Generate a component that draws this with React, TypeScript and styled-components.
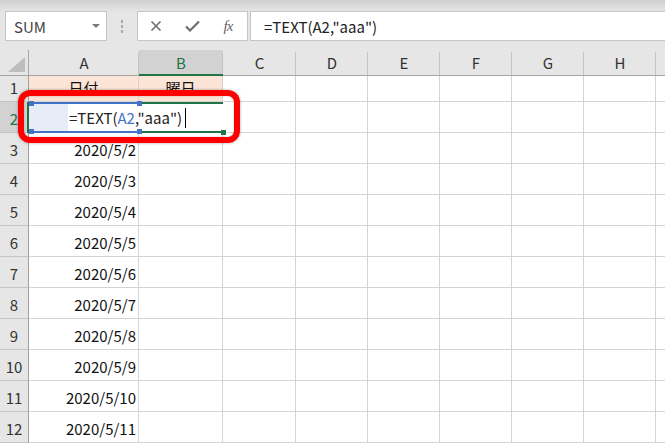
import React from 'react';
import styled, { createGlobalStyle, css } from 'styled-components';

const GlobalStyle = createGlobalStyle`
  html, body {
    margin: 0;
    padding: 0;
    background: #ffffff;
    overflow: hidden;
  }
  body {
    font-family: "Noto Sans CJK JP", "Noto Sans", sans-serif;
  }
`;

const FONT = `"Noto Sans CJK JP", "Noto Sans", sans-serif`;
const GREEN = '#217346';
const GRID = '#d4d4d4';

const Page = styled.div`
  width: 665px;
  height: 443px;
  display: flex;
  flex-direction: column;
  background: #ffffff;
  overflow: hidden;
`;

const Toolbar = styled.div`
  height: 50px;
  flex: none;
  display: flex;
  align-items: flex-start;
  padding: 11px 0 0 5px;
  box-sizing: border-box;
  background: linear-gradient(#cfcfcf 0px, #e3e3e3 10px, #e6e6e6 14px);
`;

const Box = styled.div<{ $w: number }>`
  width: ${(p) => p.$w}px;
  height: 30px;
  flex: none;
  box-sizing: border-box;
  background: #ffffff;
  border: 1px solid #c6c6c6;
  display: flex;
  align-items: center;
`;

const NameText = styled.span`
  flex: 1;
  padding-left: 8px;
  font-family: ${FONT};
  font-size: 15px;
  color: #444;
`;

const DropTri = styled.span`
  width: 0;
  height: 0;
  margin-right: 6px;
  border-left: 4px solid transparent;
  border-right: 4px solid transparent;
  border-top: 4px solid #7a7a7a;
`;

const Dots = styled.div`
  width: 30px;
  height: 30px;
  flex: none;
  display: flex;
  flex-direction: column;
  align-items: center;
  justify-content: center;
  gap: 2px;
  span {
    width: 2px;
    height: 3px;
    background: #a8a8a8;
  }
`;

const IconBtn = styled.div`
  width: 36px;
  height: 28px;
  display: flex;
  align-items: center;
  justify-content: center;
  color: #6a6a6a;
`;

const Fx = styled.span`
  font-family: "Liberation Serif", serif;
  font-style: italic;
  font-size: 15px;
  color: #666;
  letter-spacing: -1px;
`;

const FormulaText = styled.span`
  padding-left: 13px;
  font-family: ${FONT};
  font-size: 15px;
  color: #222;
  white-space: nowrap;
`;

const Sheet = styled.div`
  position: relative;
  flex: 1;
  display: flex;
  flex-direction: column;
`;

const Row = styled.div<{ $h: number }>`
  display: flex;
  height: ${(p) => p.$h}px;
  flex: none;
`;

const HeadCell = styled.div<{ $w: number; $sel?: boolean }>`
  width: ${(p) => p.$w}px;
  flex: none;
  box-sizing: border-box;
  display: flex;
  align-items: center;
  justify-content: center;
  font-family: ${FONT};
  font-size: 15px;
  color: #333;
  background: #e6e6e6;
  border-bottom: 1px solid #a6a6a6;
  position: relative;
  &::after {
    content: '';
    position: absolute;
    right: 0;
    top: 2px;
    bottom: 0;
    width: 1px;
    background: #c4c4c4;
  }
  ${(p) =>
    p.$sel &&
    css`
      background: #d2d2d2;
      color: ${GREEN};
      border-bottom: 2px solid ${GREEN};
    `}
`;

const Corner = styled(HeadCell)`
  border-right: 1px solid #a6a6a6;
  &::after {
    display: none;
  }
  &::before {
    content: '';
    position: absolute;
    right: 3px;
    bottom: 3px;
    width: 0;
    height: 0;
    border-left: 17px solid transparent;
    border-bottom: 15px solid #bdbdbd;
  }
`;

const RowHead = styled.div<{ $sel?: boolean }>`
  width: 29px;
  flex: none;
  box-sizing: border-box;
  display: flex;
  align-items: flex-end;
  justify-content: center;
  padding-bottom: 3px;
  font-family: ${FONT};
  font-size: 15px;
  line-height: 20px;
  color: #333;
  background: ${(p) => (p.$sel ? '#d2d2d2' : '#e6e6e6')};
  ${(p) => p.$sel && `color: ${GREEN};`}
  border-right: 1px solid #9e9e9e;
  border-bottom: 1px solid #c4c4c4;
`;

const Cell = styled.div<{ $w: number; $align?: 'left' | 'center' | 'right'; $fill?: string }>`
  width: ${(p) => p.$w}px;
  flex: none;
  box-sizing: border-box;
  display: flex;
  align-items: flex-end;
  justify-content: ${(p) =>
    p.$align === 'right' ? 'flex-end' : p.$align === 'center' ? 'center' : 'flex-start'};
  padding: 0 2px 3px 2px;
  font-family: ${FONT};
  font-size: 15px;
  line-height: 20px;
  color: #111;
  white-space: nowrap;
  background: ${(p) => p.$fill || '#ffffff'};
  border-right: 1px solid ${GRID};
  border-bottom: 1px solid ${GRID};
`;

/* overlays: range reference box, edit box, red highlight */
const RefBox = styled.div`
  position: absolute;
  left: 29px;
  top: 52px;
  width: 110px;
  height: 31px;
  box-sizing: border-box;
  border-top: 2px solid #4472c4;
  border-bottom: 2px solid #4472c4;
  background: #e7edf7;
`;

const Handle = styled.span<{ $c: string }>`
  position: absolute;
  width: 5px;
  height: 5px;
  background: ${(p) => p.$c};
`;

const EditBox = styled.div`
  position: absolute;
  left: 68px;
  top: 54px;
  width: 155px;
  height: 27px;
  background: #ffffff;
  display: flex;
  align-items: center;
  padding-left: 1px;
  font-family: ${FONT};
  font-size: 15px;
  color: #222;
  white-space: nowrap;
`;

const Caret = styled.span`
  display: inline-block;
  width: 1px;
  height: 20px;
  margin-left: 3px;
  background: #000;
`;

const ActiveEdge = styled.div`
  position: absolute;
  left: 141px;
  top: 52px;
  width: 82px;
  height: 31px;
  box-sizing: border-box;
  border-top: 2px solid ${GREEN};
  border-bottom: 2px solid ${GREEN};
`;

const LeftEdge = styled.div`
  position: absolute;
  left: 27px;
  top: 52px;
  width: 2px;
  height: 31px;
  background: ${GREEN};
`;

const Highlight = styled.div`
  position: absolute;
  left: 18px;
  top: 40px;
  width: 222px;
  height: 53px;
  box-sizing: border-box;
  border: 6px solid #ff0000;
  border-radius: 12px;
  box-shadow: 0 0 3px rgba(0, 0, 0, 0.35), inset 0 0 2px rgba(0, 0, 0, 0.25);
`;

const Ref = styled.span`
  color: #4472c4;
`;

const COLS = [
  { key: 'A', w: 110 },
  { key: 'B', w: 84 },
  { key: 'C', w: 73 },
  { key: 'D', w: 72 },
  { key: 'E', w: 72 },
  { key: 'F', w: 72 },
  { key: 'G', w: 72 },
  { key: 'H', w: 72 },
  // next column only peeks in at the right edge, its label is off-screen
  { key: '', w: 72 },
];

const dates = Array.from({ length: 10 }, (_, i) => `2020/5/${i + 2}`);

function CancelIcon() {
  return (
    <svg width="12" height="12" viewBox="0 0 12 12">
      <path d="M1.5 1.5 L10.5 10.5 M10.5 1.5 L1.5 10.5" stroke="#6e6e6e" strokeWidth="1.6" fill="none" />
    </svg>
  );
}

function EnterIcon() {
  return (
    <svg width="15" height="12" viewBox="0 0 15 12">
      <path d="M1 6.5 L5 10.5 L14 1.5" stroke="#6e6e6e" strokeWidth="2.2" fill="none" />
    </svg>
  );
}

export default function App() {
  return (
    <Page>
      <GlobalStyle />
      <Toolbar>
        <Box $w={102}>
          <NameText>SUM</NameText>
          <DropTri />
        </Box>
        <Dots>
          <span />
          <span />
          <span />
        </Dots>
        <Box $w={111}>
          <IconBtn>
            <CancelIcon />
          </IconBtn>
          <IconBtn>
            <EnterIcon />
          </IconBtn>
          <IconBtn>
            <Fx>fx</Fx>
          </IconBtn>
        </Box>
        <Box $w={420} style={{ marginLeft: 2 }}>
          <FormulaText>=TEXT(A2,"aaa")</FormulaText>
        </Box>
      </Toolbar>

      <Sheet>
        <Row $h={26}>
          <Corner $w={29} />
          {COLS.map((c, i) => (
            <HeadCell key={i} $w={c.w} $sel={c.key === 'B'}>
              {c.key}
            </HeadCell>
          ))}
        </Row>

        <Row $h={26}>
          <RowHead>1</RowHead>
          {COLS.map((c, i) => (
            <Cell
              key={i}
              $w={c.w}
              $align="center"
              $fill={i < 2 ? '#fce4d6' : undefined}
            >
              {i === 0 ? '日付' : i === 1 ? '曜日' : ''}
            </Cell>
          ))}
        </Row>

        <Row $h={31}>
          <RowHead $sel>2</RowHead>
          {COLS.map((c, i) => (
            <Cell key={i} $w={c.w} />
          ))}
        </Row>

        {dates.map((d, r) => (
          <Row $h={31} key={d}>
            <RowHead>{r + 3}</RowHead>
            {COLS.map((c, i) => (
              <Cell key={i} $w={c.w} $align="right">
                {i === 0 ? d : ''}
              </Cell>
            ))}
          </Row>
        ))}

        <RefBox />
        <ActiveEdge />
        <EditBox>
          =TEXT(<Ref>A2</Ref>,"aaa")
          <Caret />
        </EditBox>
        <LeftEdge />
        <Handle $c="#4472c4" style={{ left: 29, top: 51 }} />
        <Handle $c="#4472c4" style={{ left: 137, top: 51 }} />
        <Handle $c="#4472c4" style={{ left: 29, top: 79 }} />
        <Handle $c="#4472c4" style={{ left: 137, top: 79 }} />
        <Handle $c={GREEN} style={{ left: 221, top: 80 }} />
        <Highlight />
      </Sheet>
    </Page>
  );
}
